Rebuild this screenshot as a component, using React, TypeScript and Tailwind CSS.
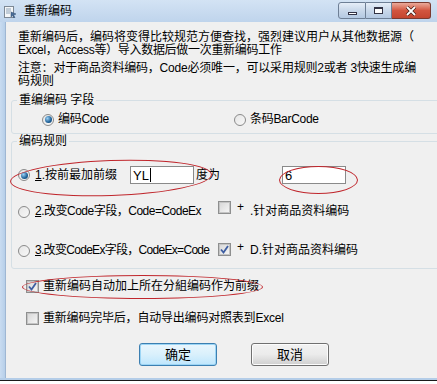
import React from "react";

const font = "font-['Liberation_Sans','Noto_Sans_CJK_SC',sans-serif]";

function Radio({ checked }: { checked?: boolean }) {
  return (
    <span className="flex-shrink-0 w-[12px] h-[12px] rounded-full border border-[#8a8a8a] bg-gradient-to-br from-[#e6e6e6] to-[#f8f8f8] flex items-center justify-center">
      {checked && (
        <span className="w-[7px] h-[7px] rounded-full bg-[radial-gradient(circle_at_35%_35%,#9ad0f5,#1d5f96_60%,#123f66)]" />
      )}
    </span>
  );
}

function Check({ checked, className = "" }: { checked?: boolean; className?: string }) {
  return (
    <span
      className={`flex-shrink-0 w-[13px] h-[13px] border border-[#8e8f8f] bg-white flex items-center justify-center ${className}`}
    >
      <span className="w-[11px] h-[11px] border border-[#c4c4c4] bg-gradient-to-br from-[#d9d9d9] to-[#f4f4f4] flex items-center justify-center">
        {checked && (
          <svg width="9" height="9" viewBox="0 0 9 9">
            <path d="M1 4.5 L3.5 7.5 L8 1" fill="none" stroke="#3d5da1" strokeWidth="1.8" />
          </svg>
        )}
      </span>
    </span>
  );
}

function TitleButtons() {
  return (
    <div className="ml-auto mr-[6px] flex items-center h-[17px] self-start mt-[2px]">
      <div className="w-[28px] h-[17px] rounded-l-[3px] border border-[#6e7f95] bg-gradient-to-b from-[#e6eef8] via-[#c9d8ea] to-[#b4c9e2] flex items-center justify-center">
        <span className="mt-[5px] w-[9px] h-[3px] border border-[#334] bg-white" />
      </div>
      <div className="w-[26px] h-[17px] border-y border-r border-[#6e7f95] bg-gradient-to-b from-[#e6eef8] via-[#c9d8ea] to-[#b4c9e2] flex items-center justify-center">
        <span className="w-[9px] h-[7px] border border-[#334] border-t-2 bg-white" />
      </div>
      <div className="w-[39px] h-[17px] rounded-r-[3px] border-y border-r border-[#7a3a30] bg-gradient-to-b from-[#e9a99a] via-[#d2553f] to-[#c4452f] flex items-center justify-center">
        <svg width="12" height="10" viewBox="0 0 12 10">
          <path d="M2 1 L10 9 M10 1 L2 9" stroke="#3a1a14" strokeWidth="3.2" />
          <path d="M2 1 L10 9 M10 1 L2 9" stroke="#ffffff" strokeWidth="1.8" />
        </svg>
      </div>
    </div>
  );
}

export default function App() {
  return (
    <div className={`w-[437px] h-[384px] overflow-hidden bg-white flex flex-col text-[12px] leading-[13px] text-black whitespace-nowrap ${font}`}>
      {/* Title bar */}
      <div className="h-[22px] flex items-center bg-gradient-to-b from-[#d3e3f4] to-[#bfd4ec] pl-[4px]">
        <svg width="13" height="12" viewBox="0 0 13 12" className="mr-[7px] mt-[1px]">
          <rect x="0.5" y="0.5" width="9" height="11" fill="#f4f6f8" stroke="#7d8894" />
          <path d="M2 3h5M2 5h5M2 7h4" stroke="#8ea3b8" />
          <path d="M7 6 L12 8 L9.5 9 L11 11.5 L10 12 L8.5 9.6 L7 11 Z" fill="#4b6f99" stroke="#2d4b70" strokeWidth="0.5" />
        </svg>
        <span>重新编码</span>
        <TitleButtons />
      </div>

      <div className="h-[356px] flex">
        {/* left frame */}
        <div className="w-[6px] bg-gradient-to-r from-[#c9dcf1] to-[#b7cfe9] border-r border-[#9fb7d3]" />

        {/* client */}
        <div className="relative flex-1 bg-[#f0f0f0] overflow-hidden">
          <div className="pl-[12px] pt-[9px]">
            <p>重新编码后，编码将变得比较规范方便查找，强烈建议用户从其他数据源（</p>
            <p className="tracking-[-0.3px]">Excel，Access等）导入数据后做一次重新编码工作</p>
            <p className="mt-[5px] tracking-[-0.2px]">注意：对于商品资料编码，Code必须唯一，可以采用规则2或者 3快速生成编</p>
            <p>码规则</p>
          </div>

          <fieldset className="ml-[5px] mr-[-10px] mt-[6px] border border-[#d5dfe5] rounded-[3px]">
            <legend className="ml-[5px] px-[2px]">重编编码 字段</legend>
            <div className="pt-[6px] pb-[7px] flex items-center">
              <div className="ml-[30px] w-[192px] flex items-center gap-[4px]">
                <Radio checked />
                <span className="tracking-[-0.3px]">编码Code</span>
              </div>
              <div className="flex items-center gap-[4px]">
                <Radio />
                <span className="tracking-[-0.3px]">条码BarCode</span>
              </div>
            </div>
          </fieldset>

          <fieldset className="ml-[5px] mr-[-10px] mt-[1px] border border-[#d5dfe5] rounded-[3px] pb-[11px]">
            <legend className="ml-[5px] px-[2px]">编码规则</legend>

            <div className="pt-[18px] flex items-center">
              <div className="ml-[6px]"><Radio checked /></div>
              <span className="ml-[5px] w-[95px] flex-shrink-0"><span className="underline">1</span>.按前最加前缀</span>
              <div className="flex-shrink-0 w-[64px] h-[18px] border border-[#8a8a8a] bg-white flex items-center pl-[2px] text-[13px]">
                YL<span className="ml-[1px] w-[1px] h-[14px] bg-black" />
              </div>
              <span className="ml-[2px]">度为</span>
              <div className="flex-shrink-0 ml-[62px] w-[64px] h-[18px] border border-[#8a8a8a] bg-white flex items-center pl-[2px] text-[13px]">
                6
              </div>
            </div>

            <div className="mt-[21px] flex items-center">
              <div className="ml-[6px]"><Radio /></div>
              <span className="ml-[5px] w-[183px] flex-shrink-0 tracking-[-0.5px]"><span className="underline">2</span>.改变Code字段，Code=CodeEx</span>
              <Check className="-translate-y-[4px]" />
              <span className="ml-[6px] w-[13px] -translate-y-[4px]">+</span>
              <span>.针对商品资料编码</span>
            </div>

            <div className="mt-[26px] flex items-center">
              <div className="ml-[6px]"><Radio /></div>
              <span className="ml-[5px] w-[183px] flex-shrink-0 tracking-[-0.7px]"><span className="underline">3</span>.改变CodeEx字段，CodeEx=Code</span>
              <Check checked className="-translate-y-[1px]" />
              <span className="ml-[6px] w-[13px] -translate-y-[3px]">+</span>
              <span>D.针对商品资料编码</span>
            </div>
          </fieldset>

          <div className="mt-[11px] ml-[20px] flex items-center gap-[4px]">
            <Check checked />
            <span>重新编码自动加上所在分組编码作为前缀</span>
          </div>

          <div className="mt-[19px] ml-[20px] flex items-center gap-[4px]">
            <Check />
            <span className="tracking-[-0.2px]">重新编码完毕后，自动导出编码对照表到Excel</span>
          </div>

          <div className="mt-[18px] ml-[133px] flex gap-[34px]">
            <button className="w-[78px] h-[23px] rounded-[3px] border border-[#3c7fb1] bg-gradient-to-b from-[#eaf6fd] via-[#d9f0fc] to-[#bee6fd] shadow-[inset_0_0_0_1px_#9cd5f5] text-[13px]">
              确定
            </button>
            <button className="w-[78px] h-[23px] rounded-[3px] border border-[#707070] bg-gradient-to-b from-[#f2f2f2] via-[#ebebeb] to-[#cfcfcf] shadow-[inset_0_0_0_1px_#fcfcfc] text-[13px]">
              取消
            </button>
          </div>

          {/* red hand-drawn ellipses */}
          <div className="absolute left-[4px] top-[138px] w-[202px] h-[36px] rounded-[50%] border border-[#c0272d] -rotate-[2deg]" />
          <div className="absolute left-[273px] top-[144px] w-[79px] h-[28px] rounded-[50%] border border-[#c0272d]" />
          <div className="absolute left-[16px] top-[253px] w-[241px] h-[24px] rounded-[50%] border border-[#c0272d]" />
        </div>
      </div>

      <div className="h-[2px] bg-[#b4cde8]" />
      <div className="h-[1px] bg-[#1a1a1a]" />
      <div className="flex-1 bg-white" />
    </div>
  );
}
